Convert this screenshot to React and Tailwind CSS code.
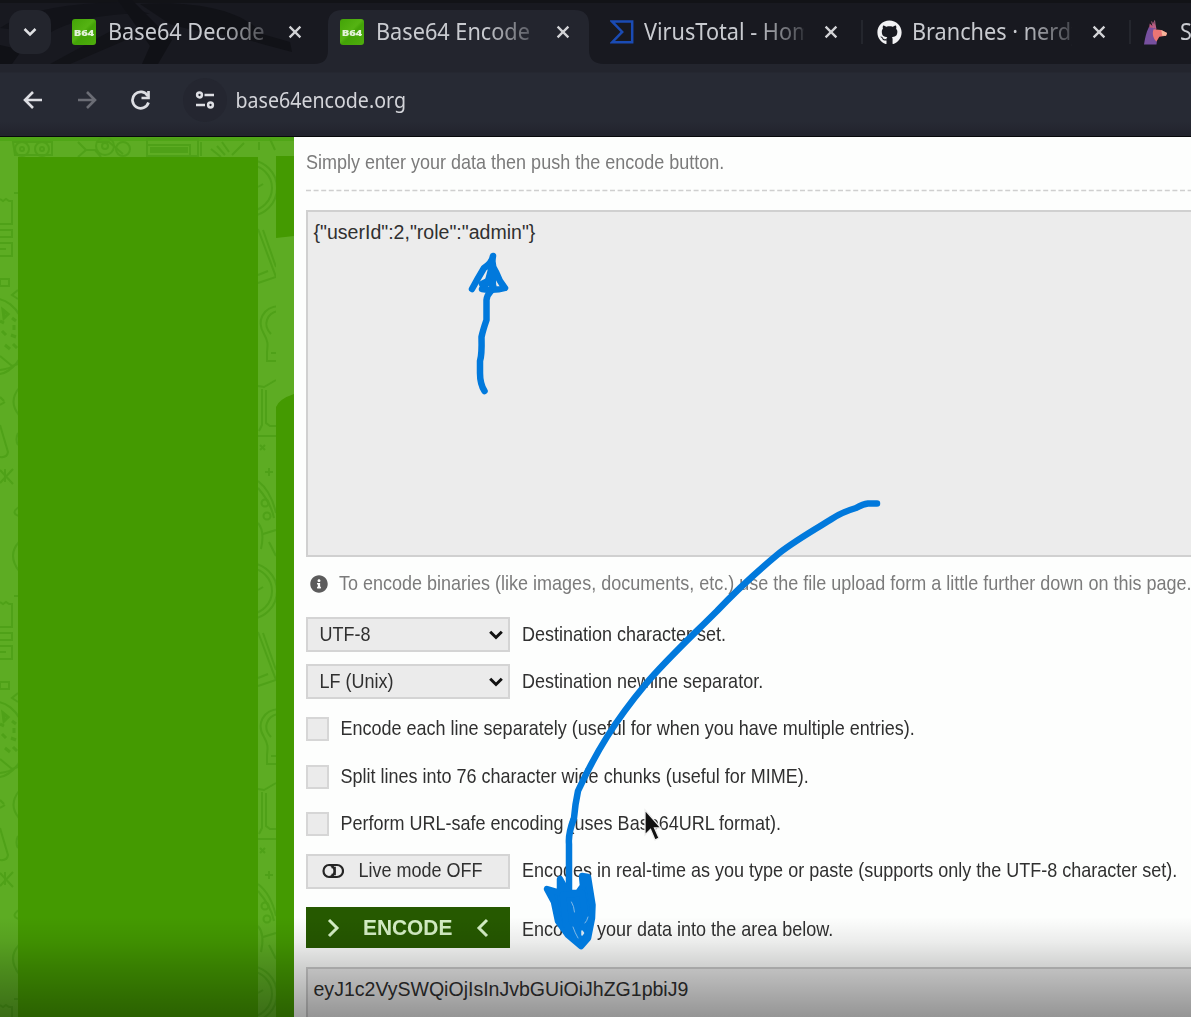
import React from "react";
import { FaGithub, FaInfoCircle } from "react-icons/fa";

const INK = "#0179dc";

function B64Icon() {
  return (
    <div className="flex h-[26px] w-6 items-center justify-center overflow-hidden rounded-[3px] bg-[linear-gradient(135deg,#43a307_0%,#55b313_45%,#43a307_55%,#4fae0d_100%)]">
      <span className="origin-center scale-x-[1.13] scale-y-95 font-['Noto_Sans',sans-serif] text-[10px] leading-none font-black tracking-[-0.2px] text-[#e4f3da]">B64</span>
    </div>
  );
}

function VirusTotalIcon() {
  return (
    <svg width="24" height="24" viewBox="0 0 24 24" fill="none" stroke="#1a4bb4" strokeWidth="2.5">
      <path d="M2.2 1.6H22.2V22.2H2.2L12.2 11.9Z" />
    </svg>
  );
}

function AnimalIcon() {
  return (
    <svg width="25" height="27" viewBox="0 0 25 27">
      <path d="M5 11L6 4l3 3 1-5 3 7-2 6z" fill="#c0577f" />
      <path d="M5 8C2 14 1 20 0 26h13l1-8-2-9z" fill="#77509f" />
      <path d="M10 10l8 1 6 3-1 3-7 1-3 5c-3-3-5-8-3-13z" fill="#ea7574" />
      <path d="M18 11l6 3-1 3-4 0z" fill="#f5b49a" />
      <path d="M8 2l2 7M11 1l1 8" stroke="#b66a8c" strokeWidth="1" />
    </svg>
  );
}

function Close() {
  return (
    <svg width="14" height="14" viewBox="0 0 14 14" stroke="#d2d3d6" strokeWidth="2.3" fill="none">
      <path d="M1.6 1.6L12.4 12.4M12.4 1.6L1.6 12.4" />
    </svg>
  );
}

function Tab({ icon, title, active, separator }) {
  return (
    <div className="relative flex h-16 w-[268px] shrink-0 items-center pl-3">
      {active && (
        <svg className="absolute -left-[14px] top-[10px]" width="290" height="54" viewBox="0 0 290 54" fill="#23252e">
          <path d="M0 54C10 54 14 49 14 40V14C14 5 19 0 28 0H261C270 0 275 5 275 14V40C275 49 280 54 290 54Z" />
        </svg>
      )}
      {separator && <div className="absolute -left-[3px] top-5 h-6 w-[2px] bg-[#24262d]" />}
      <div className="relative flex w-6 shrink-0 justify-center">{icon}</div>
      <div className="relative ml-[12px] w-[160px] overflow-hidden whitespace-nowrap text-[21.7px] leading-8 text-[#c9cbd0] [mask-image:linear-gradient(to_right,black_68%,rgba(0,0,0,0.3)_98%,transparent)]">
        <span className="inline-block origin-center scale-y-[1.06]">{title}</span>
      </div>
      <div className="relative ml-[20px]"><Close /></div>
    </div>
  );
}

function TabStrip() {
  return (
    <div className="relative flex h-16 overflow-hidden bg-[#181920]">
      <svg className="absolute inset-0" width="1191" height="64" fill="none">
        <rect width="1191" height="3" fill="#121317" />
        <path d="M0 28C30 8 70 4 118 2L150 14C110 12 70 20 48 34Z" fill="#121319" />
        <path d="M118 0L150 46L142 64H158L172 40L132 0Z" fill="#101116" />
        <path d="M50 64L120 26L140 34L70 64Z" fill="#121318" />
        <path d="M140 4C200 0 245 12 262 34L290 42L292 52L262 44C225 32 200 34 170 24Z" fill="#111217" />
        <path d="M0 64V45L22 50L12 64Z" fill="#101116" />
      </svg>
      <div className="relative ml-[9px] mt-[10px] mr-[9px] flex h-[44px] w-[42px] shrink-0 items-center justify-center rounded-[14px] bg-[#23252d]">
        <svg width="14" height="10" viewBox="0 0 14 10" fill="none" stroke="#dfe0e3" strokeWidth="2.5"><path d="M1.5 2L7 7.5L12.500 2" /></svg>
      </div>
      <Tab icon={<B64Icon />} title="Base64 Decode" />
      <Tab icon={<B64Icon />} title="Base64 Encode" active />
      <Tab icon={<div className="pl-[3px]"><VirusTotalIcon /></div>} title="VirusTotal - Home" />
      <Tab icon={<FaGithub size={25} color="#f2f2f4" className="ml-[2px] shrink-0" />} title="Branches · nerdy" separator />
      <Tab icon={<AnimalIcon />} title="Sign in" separator />
    </div>
  );
}

function Toolbar() {
  return (
    <div className="flex h-[73px] items-center border-b-[1px] border-[#08090b] bg-[linear-gradient(#23252e_0px,#23252e_8px,#272a34_9px,#272a34_58px,#22242d_70px)] pl-[23px]">
      <svg width="19" height="18" viewBox="0 0 19 18" fill="none" stroke="#dddee3" strokeWidth="2.6"><path d="M19 9H2M10 1L2 9L10 17" /></svg>
      <svg className="ml-[36px]" width="19" height="18" viewBox="0 0 19 18" fill="none" stroke="#6b6d75" strokeWidth="2.6"><path d="M0 9H17M9 1L17 9L9 17" /></svg>
      <svg className="ml-[33px]" width="21" height="21" viewBox="0 0 21 21" fill="none" stroke="#dddee3" strokeWidth="2.7">
        <path d="M17.800 6A8.200 8.200 0 1 0 18.500 12.500" /><path d="M18.500 1V8H11.500" />
      </svg>
      <div className="ml-[32px] flex h-[44px] w-[44px] items-center justify-center rounded-full bg-[#242630]">
        <svg width="20" height="18" viewBox="0 0 20 18" fill="none" stroke="#dddee3" strokeWidth="2.5">
          <circle cx="4.500" cy="4" r="2.400" /><path d="M9.500 4H19M1 14H10" /><circle cx="15.500" cy="14" r="2.400" />
        </svg>
      </div>
      <div className="ml-[8.5px] origin-center scale-y-[1.09] text-[19.6px] leading-8 text-[#d3d4d9]">base64encode.org</div>
    </div>
  );
}

function DoodleTile({ y }) {
  return (
    <g transform={`translate(0 ${y})`}>
      <circle cx="249" cy="51" r="28" /><circle cx="249" cy="51" r="23" /><path d="M258 50l5-3" />
      <path d="M258 92L276 140L258 146M263 93L276 130M258 138l10-4" />
      <path d="M279 169C263 170 256 184 264 197C268 204 268 207 267 215V224H278M278 174C267 176 262 188 271 197M271 216h7" />
      <path d="M258 249l6 1l12-7M262 252V288l-3 6M266 253V286l4 3h7M258 299H278" />
      <path d="M260 308l5 5M265 308l-5 5M269 331v8M265 335h8" />
      <path d="M258 344Q271 354 276 376M258 351Q271 366 274 381M258 386q7 8 3 26M263 397l13-4M269 405l7 14" />
      <circle cx="265" cy="366" r="3.500" /><circle cx="267" cy="379" r="3.500" />
      <path d="M0 62l3 2l3-2l3 2h3V87H0M0 93H12V100H0M0 106H12V119H0M0 112H6" />
      <path d="M0 142H9V149H0ZM18 153l-6 5l6 4M14 56h5" />
      <path d="M-12 163C3 158 20 169 26 195C28 219 10 241 -10 237M0 219L12 229L18 227M0 233Q9 232 17 227" />
      <path d="M3 173l5 4l-4 4zM12 181l4 3M2 194l4 4M14 188v5M5 208l5 4M13 207l4 4M11 198l5 2M0 184l4 2" strokeWidth="3" />
      <path d="M0 260l4 4M0 268l5-3M19 251q-11 14 0 27M0 288L8 315Q7 321 0 320M18 296q-3 7 0 12" />
      <path d="M0 333l13 14M13 332L0 346M5 332v13M19 370q-9 6 0 9M19 405q-12 13 0 29" />
    </g>
  );
}

function Sidebar() {
  return (
    <aside className="relative w-[294px] shrink-0 overflow-hidden bg-[#5dac23] pl-[18px] pt-5">
      <svg className="absolute left-0 top-0" width="294" height="880" fill="none" stroke="#4fa118" strokeWidth="2">
        <rect width="294" height="4" fill="#50a617" stroke="none" />
        <DoodleTile y={0} />
        <DoodleTile y={403} />
        <DoodleTile y={806} />
        <path d="M13 5H52V18H15ZM78 5l8 8l-8 7M85 13h10l6 7M97 5h12l14 12M147 2H198V19H147ZM147 8H190V19M201 5V19M211 12l10 8M217 9l8 9M222 5l7 10M232 18l12-12M259 5v8M270 2l5 11" />
        <circle cx="22" cy="12" r="7" /><circle cx="42" cy="12" r="7" /><circle cx="105" cy="9" r="9" /><circle cx="123" cy="12" r="7" />
        <circle cx="22" cy="12" r="2" /><circle cx="42" cy="12" r="2" /><circle cx="105" cy="9" r="3" />
        <path d="M150 13H188" strokeWidth="6" />
        <path d="M276 19H294V99L276 101Z" fill="#449a01" stroke="none" />
        <rect x="276" y="101" width="18" height="159" fill="#5dac23" stroke="none" />
        <path d="M276 270Q279 262 294 257V880H276Z" fill="#449a01" stroke="none" />
      </svg>
      <div className="relative h-[880px] w-60 bg-[#449a01]" />
    </aside>
  );
}

function Body({ children, className = "" }) {
  return <span className={"inline-block origin-center scale-y-[1.08] whitespace-nowrap text-[18px] leading-6 " + className}>{children}</span>;
}

function Select({ value, label }) {
  return (
    <div className="flex h-[47.3px] shrink-0 items-center">
      <div className="flex h-[35px] w-[204px] items-center justify-between border-2 border-[#d4d4d4] bg-[#ebebeb] pl-[11.5px] pr-[5px]">
        <Body>{value}</Body>
        <svg width="14" height="10" viewBox="0 0 14 10" fill="none" stroke="#111" strokeWidth="3"><path d="M1.200 1.800L7 7.500L12.800 1.800" /></svg>
      </div>
      <Body className="ml-3">{label}</Body>
    </div>
  );
}

function Check({ label }) {
  return (
    <div className="flex h-[47.3px] shrink-0 items-center">
      <div className="h-[24px] w-[23px] border-2 border-[#d6d6d6] bg-[#ebebeb]" />
      <Body className="ml-[11.500px]">{label}</Body>
    </div>
  );
}

function Main() {
  return (
    <main className="flex min-w-0 flex-1 flex-col bg-[#fdfefd] pl-3 text-[#303030]">
      <div className="flex h-[50px] shrink-0 items-center pt-[2px]"><Body className="text-[#7b7b7b]">Simply enter your data then push the encode button.</Body></div>
      <svg className="mt-px shrink-0" width="885" height="4"><path d="M0 2.500H885" stroke="#cfcfcf" strokeWidth="1.500" strokeDasharray="5 2.600" /></svg>
      <div className="mt-[18px] h-[347px] shrink-0 border-2 border-r-0 border-[#d0d0d0] bg-[#ececec] px-[5.5px] pt-[5.5px] text-[19.55px] leading-7">{'{"userId":2,"role":"admin"}'}</div>
      <div className="flex h-[54px] shrink-0 items-center">
        <FaInfoCircle size={18} color="#5c5c5c" className="ml-1 shrink-0" />
        <Body className="ml-[11px] text-[#7b7b7b]">To encode binaries (like images, documents, etc.) use the file upload form a little further down on this page.</Body>
      </div>
      <Select value="UTF-8" label="Destination character set." />
      <Select value="LF (Unix)" label="Destination newline separator." />
      <Check label="Encode each line separately (useful for when you have multiple entries)." />
      <Check label="Split lines into 76 character wide chunks (useful for MIME)." />
      <Check label="Perform URL-safe encoding (uses Base64URL format)." />
      <div className="flex h-[47.3px] shrink-0 items-center">
        <div className="flex h-[35px] w-[204px] items-center border-2 border-[#d4d4d4] bg-[#ebebeb] pl-[14px]">
          <svg width="22" height="16" viewBox="0 0 22 16" fill="none" stroke="#252525" strokeWidth="2.200">
            <path d="M7 2H15A6 6 0 0 1 15 14H7" /><ellipse cx="7" cy="8" rx="5.500" ry="6" /><path d="M9.500 4.500H13V11.500H9.500" strokeWidth="1.700" />
          </svg>
          <Body className="ml-[14.5px]">Live mode OFF</Body>
        </div>
        <Body className="ml-3">Encodes in real-time as you type or paste (supports only the UTF-8 character set).</Body>
      </div>
      <div className="mt-[12px] flex h-[41px] shrink-0 items-center">
        <div className="flex h-[41px] w-[204px] items-center bg-[#265900] pl-[21px] pt-px text-[#d5efc5]">
          <svg width="13" height="20" viewBox="0 0 13 20" fill="none" stroke="currentColor" strokeWidth="3"><path d="M2 2L10 10L2 18" /></svg>
          <span className="ml-[23px] w-[90px] origin-center scale-y-[1.04] pt-px text-[20.9px] leading-6 font-bold">ENCODE</span>
          <svg className="ml-[23px]" width="13" height="20" viewBox="0 0 13 20" fill="none" stroke="currentColor" strokeWidth="3"><path d="M11 2L3 10L11 18" /></svg>
        </div>
        <Body className="ml-3 pt-1">Encodes your data into the area below.</Body>
      </div>
      <div className="mt-[19px] h-[60px] shrink-0 border-2 border-r-0 border-[#cccccc] bg-[#ececec] px-[5.5px] pt-[6px] text-[19.55px] leading-7">eyJ1c2VySWQiOjIsInJvbGUiOiJhZG1pbiJ9</div>
    </main>
  );
}

function Annotations() {
  return (
    <svg className="absolute left-0 top-0" width="1191" height="1017" fill="none" stroke={INK} strokeWidth="6.500" strokeLinecap="round" strokeLinejoin="round">
      <path d="M484.500 391Q480 384 480 373V361Q482 355 481.500 337Q483 330 486.500 320V300Q487 295 491 291" />
      <path d="M472 289Q478 278 484 268Q492 263 493 256Q491 266 496 272Q499 281 505 288Q495 291 482 289L488 281L492 266L493 286" />
      <path d="M482 284L488 281L493 286" />
      <path d="M877 503.500H868Q863 504 856 508Q842 512 830 520C806 535 790 544 777 555C753 575 735 592 717 611C691 637 665 661 645 685C615 721 596 752 578 791Q575 805 574 818Q568 834 569 844V890" />
      <path d="M547 889L554 902L558 921L568 935L581 946L588 938L592 918L592.500 905L588 877L582 876L583 886L578 893L568 893L560 879V892L563 910L579 936L584 900Z" fill={INK} />
      <path d="M563 895L582 893L586 920L579 938L566 925Z" fill={INK} />
      <path d="M571.500 902Q574 906 574.500 912M573 927Q575 933 578 938M588 917Q587 921 585 923" stroke="#8fbfe8" strokeWidth="0.900" />
      <path d="M582 931l1.500 2l-1.500 2z" stroke="#d5e4ef" strokeWidth="1.500" />
    </svg>
  );
}

export default function App() {
  return (
    <div className="relative flex h-[1017px] w-[1191px] flex-col overflow-hidden font-['Noto_Sans',sans-serif]">
      <header className="shrink-0">
        <TabStrip />
        <Toolbar />
      </header>
      <div className="relative flex min-h-0 flex-1 overflow-hidden font-['Liberation_Sans',Arial,sans-serif]">
        <Sidebar />
        <Main />
        <div className="absolute inset-x-0 bottom-0 h-[100px] bg-[linear-gradient(transparent_0%,rgba(0,0,0,0.07)_25%,rgba(0,0,0,0.18)_50%,rgba(0,0,0,0.37)_100%)]" />
      </div>
      <svg className="absolute left-[643px] top-[808px]" width="24" height="36" viewBox="0 0 24 36">
        <path d="M2 2V27L7.500 21.500L12 32L16 30L11.500 20H18Z" fill="#111" stroke="#eeeeee" strokeWidth="1.300" />
      </svg>
      <Annotations />
    </div>
  );
}
